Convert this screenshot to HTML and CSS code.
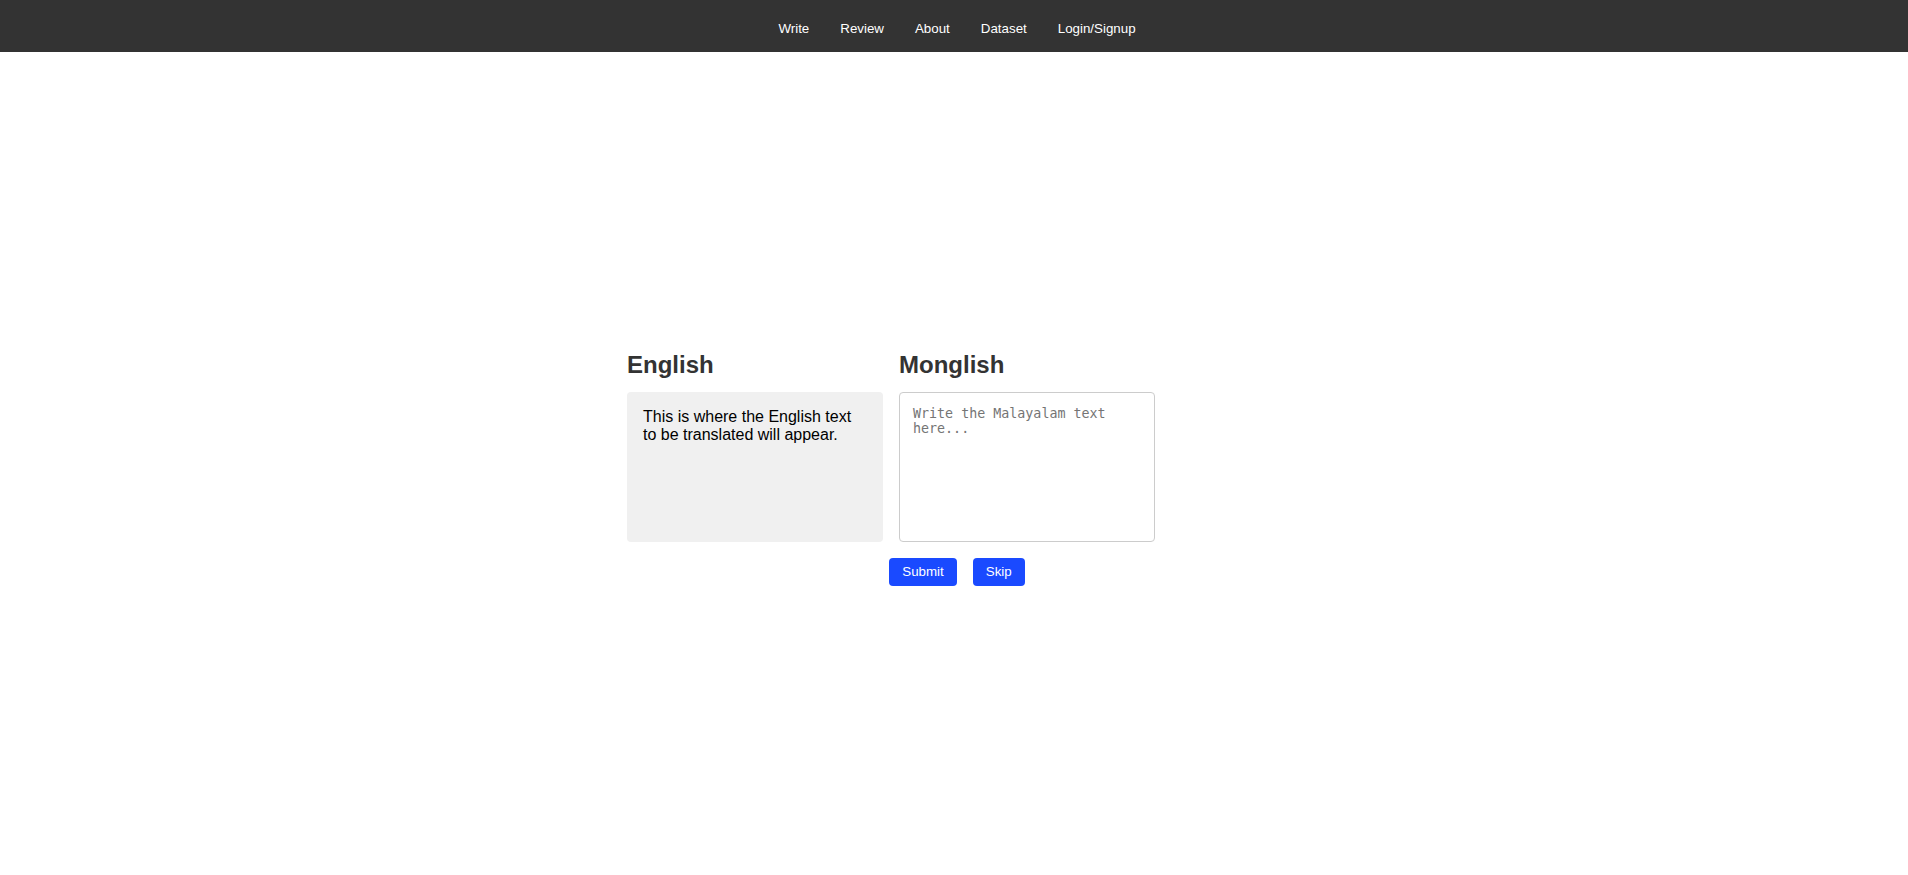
FILE: index.html
```html
<!DOCTYPE html>
<html lang="en">
<head>
<meta charset="utf-8">
<title>Monglish</title>
<link rel="stylesheet" href="styles.css">
</head>
<body>
<nav class="navbar">
  <a class="nav-link" href="#">Write</a>
  <a class="nav-link" href="#">Review</a>
  <a class="nav-link" href="#">About</a>
  <a class="nav-link" href="#">Dataset</a>
  <a class="nav-link" href="#">Login/Signup</a>
</nav>
<main class="main">
  <div class="wrapper">
    <div class="columns">
      <section class="column">
        <h2 class="col-title">English</h2>
        <div class="source-box">This is where the English text to be translated will appear.</div>
      </section>
      <section class="column">
        <h2 class="col-title">Monglish</h2>
        <textarea class="target-box" placeholder="Write the Malayalam text here..."></textarea>
      </section>
    </div>
    <div class="actions">
      <button class="btn">Submit</button>
      <button class="btn">Skip</button>
    </div>
  </div>
</main>
</body>
</html>
```
FILE: styles.css
```css
* { box-sizing: border-box; }
html, body { margin: 0; padding: 0; }
body {
  font-family: "Liberation Sans", Arial, sans-serif;
  background: #fff;
  color: #333;
}
.navbar {
  height: 52px;
  background: #333;
  display: flex;
  align-items: center;
  justify-content: center;
  gap: 31px;
  padding-left: 6px;
}
.nav-link {
  color: #fff;
  text-decoration: none;
  font-size: 13.33px;
  padding-top: 4px;
}
.main {
  height: calc(100vh - 52px);
  display: flex;
  align-items: center;
  justify-content: center;
  padding-top: 9px;
}
.wrapper {
  width: 654px;
  display: flex;
  flex-direction: column;
}
.columns {
  display: flex;
  gap: 16px;
}
.column {
  width: 256px;
  display: flex;
  flex-direction: column;
}
.col-title {
  margin: 0 0 13px;
  font-size: 24px;
  line-height: 28px;
  font-weight: bold;
  color: #333;
}
.source-box {
  height: 150px;
  background: #f0f0f0;
  border-radius: 4px;
  padding: 16px;
  font-size: 16px;
  line-height: 18.4px;
  color: #000;
}
.target-box {
  width: 256px;
  height: 150px;
  margin: 0;
  border: 1px solid #ccc;
  border-radius: 4px;
  padding: 13px 12px 12px 13px;
  font-family: "DejaVu Sans Mono", monospace;
  font-size: 13.33px;
  resize: none;
  color: #000;
}
.target-box::placeholder { color: #757575; }
.actions {
  display: flex;
  justify-content: center;
  gap: 16px;
  margin-top: 16px;
  padding-left: 6px;
}
.btn {
  height: 28px;
  padding: 0 13px;
  border: none;
  border-radius: 4px;
  background: #1a4aff;
  color: #fff;
  font-family: "Liberation Sans", Arial, sans-serif;
  font-size: 13.33px;
}
```
